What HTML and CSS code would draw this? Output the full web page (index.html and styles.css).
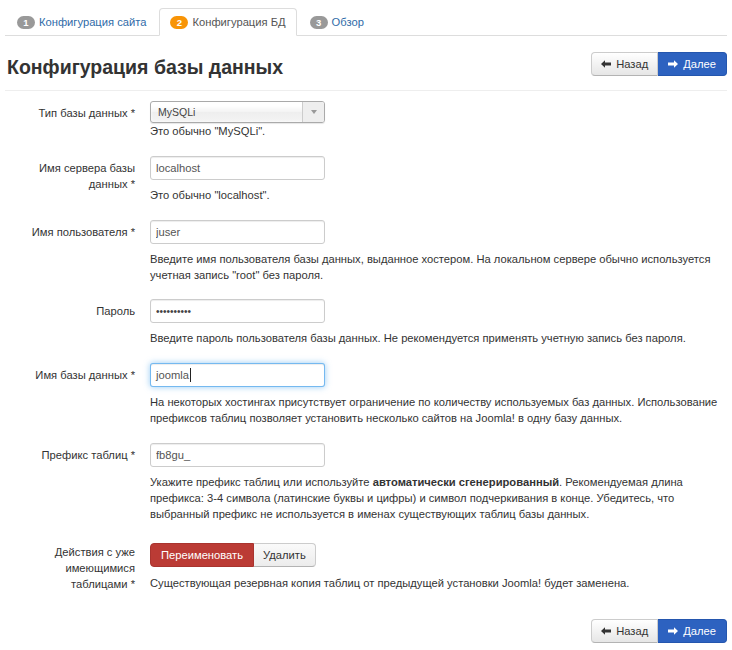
FILE: index.html
```html
<!DOCTYPE html>
<html lang="ru">
<head>
<meta charset="utf-8">
<title>Конфигурация базы данных</title>
<link rel="stylesheet" href="styles.css">
</head>
<body>
<div class="page">
  <ul class="tabs">
    <li class="tab"><span class="badge">1</span><a href="#">Конфигурация сайта</a></li>
    <li class="tab active"><span class="badge orange">2</span><span>Конфигурация БД</span></li>
    <li class="tab"><span class="badge">3</span><a href="#">Обзор</a></li>
  </ul>

  <div class="header">
    <h3 class="title">Конфигурация базы данных</h3>
    <div class="btn-group">
      <button class="btn"><svg class="ico" viewBox="0 0 10 8" width="10" height="8"><path d="M0 4 L4 0.3 L4 2.6 L10 2.6 L10 5.4 L4 5.4 L4 7.7 Z" fill="#333"/></svg>Назад</button>
      <button class="btn btn-primary"><svg class="ico" viewBox="0 0 10 8" width="10" height="8"><path d="M10 4 L6 0.3 L6 2.6 L0 2.6 L0 5.4 L6 5.4 L6 7.7 Z" fill="#fff"/></svg>Далее</button>
    </div>
  </div>
  <hr class="sep">

  <div class="row row-select">
    <label class="lbl">Тип базы данных *</label>
    <div class="ctl">
      <div class="chosen"><span class="chosen-text">MySQLi</span><span class="chosen-arrow"><svg viewBox="0 0 6 4" width="6" height="4"><path d="M0 0 L6 0 L3 4 Z" fill="#999"/></svg></span></div>
      <div class="help help-select">Это обычно "MySQLi".</div>
    </div>
  </div>

  <div class="row">
    <label class="lbl">Имя сервера базы данных *</label>
    <div class="ctl">
      <input class="inp" type="text" value="localhost">
      <div class="help">Это обычно "localhost".</div>
    </div>
  </div>

  <div class="row row-tight">
    <label class="lbl">Имя пользователя *</label>
    <div class="ctl">
      <input class="inp" type="text" value="juser">
      <div class="help">Введите имя пользователя базы данных, выданное хостером. На локальном сервере обычно используется учетная запись "root" без пароля.</div>
    </div>
  </div>

  <div class="row">
    <label class="lbl">Пароль</label>
    <div class="ctl">
      <input class="inp pw" type="text" value="••••••••••">
      <div class="help">Введите пароль пользователя базы данных. Не рекомендуется применять учетную запись без пароля.</div>
    </div>
  </div>

  <div class="row">
    <label class="lbl">Имя базы данных *</label>
    <div class="ctl">
      <div class="inp focus"><span>joomla</span><span class="caret"></span></div>
      <div class="help">На некоторых хостингах присутствует ограничение по количеству используемых баз данных. Использование префиксов таблиц позволяет установить несколько сайтов на Joomla! в одну базу данных.</div>
    </div>
  </div>

  <div class="row row-last">
    <label class="lbl">Префикс таблиц *</label>
    <div class="ctl">
      <input class="inp" type="text" value="fb8gu_">
      <div class="help">Укажите префикс таблиц или используйте <b>автоматически сгенерированный</b>. Рекомендуемая длина префикса: 3-4 символа (латинские буквы и цифры) и символ подчеркивания в конце. Убедитесь, что выбранный префикс не используется в именах существующих таблиц базы данных.</div>
    </div>
  </div>

  <div class="row row-actions">
    <label class="lbl lbl-btn">Действия с уже имеющимися таблицами *</label>
    <div class="ctl">
      <div class="btn-group seg">
        <button class="btn btn-danger">Переименовать</button>
        <button class="btn">Удалить</button>
      </div>
      <div class="help help-btn">Существующая резервная копия таблиц от предыдущей установки Joomla! будет заменена.</div>
    </div>
  </div>

  <div class="footer">
    <div class="btn-group">
      <button class="btn"><svg class="ico" viewBox="0 0 10 8" width="10" height="8"><path d="M0 4 L4 0.3 L4 2.6 L10 2.6 L10 5.4 L4 5.4 L4 7.7 Z" fill="#333"/></svg>Назад</button>
      <button class="btn btn-primary"><svg class="ico" viewBox="0 0 10 8" width="10" height="8"><path d="M10 4 L6 0.3 L6 2.6 L0 2.6 L0 5.4 L6 5.4 L6 7.7 Z" fill="#fff"/></svg>Далее</button>
    </div>
  </div>
</div>
</body>
</html>
```

FILE: styles.css
```css
* { box-sizing: border-box; }
html, body { margin: 0; padding: 0; background: #fff; }
body {
  font-family: "Liberation Sans", Arial, sans-serif;
  font-size: 11.2px;
  line-height: 16px;
  color: #333;
}
.page { padding: 0 5px; }

.tabs {
  list-style: none;
  margin: 8px 0 0;
  padding: 0 0 0 1px;
  display: flex;
  border-bottom: 1px solid #ddd;
}
.tab {
  display: flex;
  align-items: center;
  padding: 5px 10px;
  margin-right: 2px;
  margin-bottom: -1px;
  border: 1px solid transparent;
  border-radius: 4px 4px 0 0;
  line-height: 16px;
}
.tab a { color: #2f6ba8; text-decoration: none; }
.tab.active {
  border-color: #ddd #ddd transparent;
  background: #fff;
  color: #555;
}
.badge {
  display: inline-block;
  min-width: 18px;
  height: 13px;
  padding: 0 5px;
  margin-right: 4px;
  border-radius: 7px;
  background: #999;
  color: #fff;
  font-size: 9.5px;
  font-weight: bold;
  line-height: 13px;
  text-align: center;
}
.badge.orange { background: #f89406; }

.header {
  display: flex;
  justify-content: space-between;
  align-items: flex-start;
  padding-top: 16px;
}
.title {
  margin: 3px 0 0 2px;
  font-size: 19.5px;
  line-height: 24px;
  font-weight: bold;
  color: #333;
}
.sep {
  margin: 11px 0 10px;
  border: 0;
  border-top: 1px solid #eee;
}

.btn-group { display: flex; }
.btn {
  display: inline-flex;
  align-items: center;
  height: 24px;
  padding: 0 9px;
  font-family: inherit;
  font-size: 11.2px;
  line-height: 16px;
  color: #333;
  background: linear-gradient(#fff, #e6e6e6);
  border: 1px solid #ccc;
  border-bottom-color: #b3b3b3;
  cursor: pointer;
}
.btn-group .btn:first-child { border-radius: 4px 0 0 4px; }
.btn-group .btn:last-child { border-radius: 0 4px 4px 0; border-left: 0; }
.btn .ico { margin-right: 5px; }
.btn-primary {
  color: #fff;
  background: #2d62c0;
  border-color: #2456ae;
  padding: 0 10px 0 10px;
}
.btn-danger {
  color: #fff;
  background: #bb3b35;
  border-color: #a9342f;
  padding: 0 10px;
}
.seg .btn:last-child { padding: 0 9px; background: linear-gradient(#fafafa, #ececec); }

.row {
  display: grid;
  grid-template-columns: 130px 1fr;
  column-gap: 15px;
  margin-bottom: 17px;
}
.row-select { margin-bottom: 17px; }
.row-tight { margin-bottom: 16px; }
.row-last { margin-bottom: 21px; }
.row-actions { margin-bottom: 27px; }
.lbl {
  text-align: right;
  padding-top: 4px;
  padding-left: 14px;
  color: #333;
}
.lbl-btn { padding-top: 1px; }
.ctl { min-width: 0; }

.inp {
  display: block;
  width: 175px;
  height: 24px;
  padding: 3px 5px;
  font-family: inherit;
  font-size: 11.2px;
  line-height: 16px;
  color: #555;
  background: #fff;
  border: 1px solid #ccc;
  border-radius: 3px;
  box-shadow: inset 0 1px 1px rgba(0,0,0,0.075);
  outline: none;
}
.inp.pw { font-size: 10px; color: #444; }
.inp.focus {
  display: flex;
  align-items: center;
  border-color: rgba(82,168,236,0.8);
  box-shadow: inset 0 1px 1px rgba(0,0,0,0.075), 0 0 6px rgba(82,168,236,0.6);
}
.caret {
  display: inline-block;
  width: 1px;
  height: 14px;
  background: #222;
  margin-left: 1px;
}

.chosen {
  display: flex;
  width: 175px;
  height: 22px;
  border: 1px solid #aaa;
  border-radius: 3px;
  background: linear-gradient(#fff 20%, #f3f3f3 50%, #eee 52%, #f4f4f4);
  box-shadow: 0 0 3px #fff inset, 0 1px 1px rgba(0,0,0,0.1);
  overflow: hidden;
}
.chosen-text {
  flex: 1;
  padding: 2px 7px;
  font-size: 10.5px;
  line-height: 16px;
  color: #444;
}
.chosen-arrow {
  width: 22px;
  display: flex;
  align-items: center;
  justify-content: center;
  border-left: 1px solid #ccc;
  background: #eee;
}

.help { margin-top: 7px; color: #333; }
.help-select { margin-top: 0; }
.help-btn { margin-top: 8px; }

.footer {
  display: flex;
  justify-content: flex-end;
}
```
